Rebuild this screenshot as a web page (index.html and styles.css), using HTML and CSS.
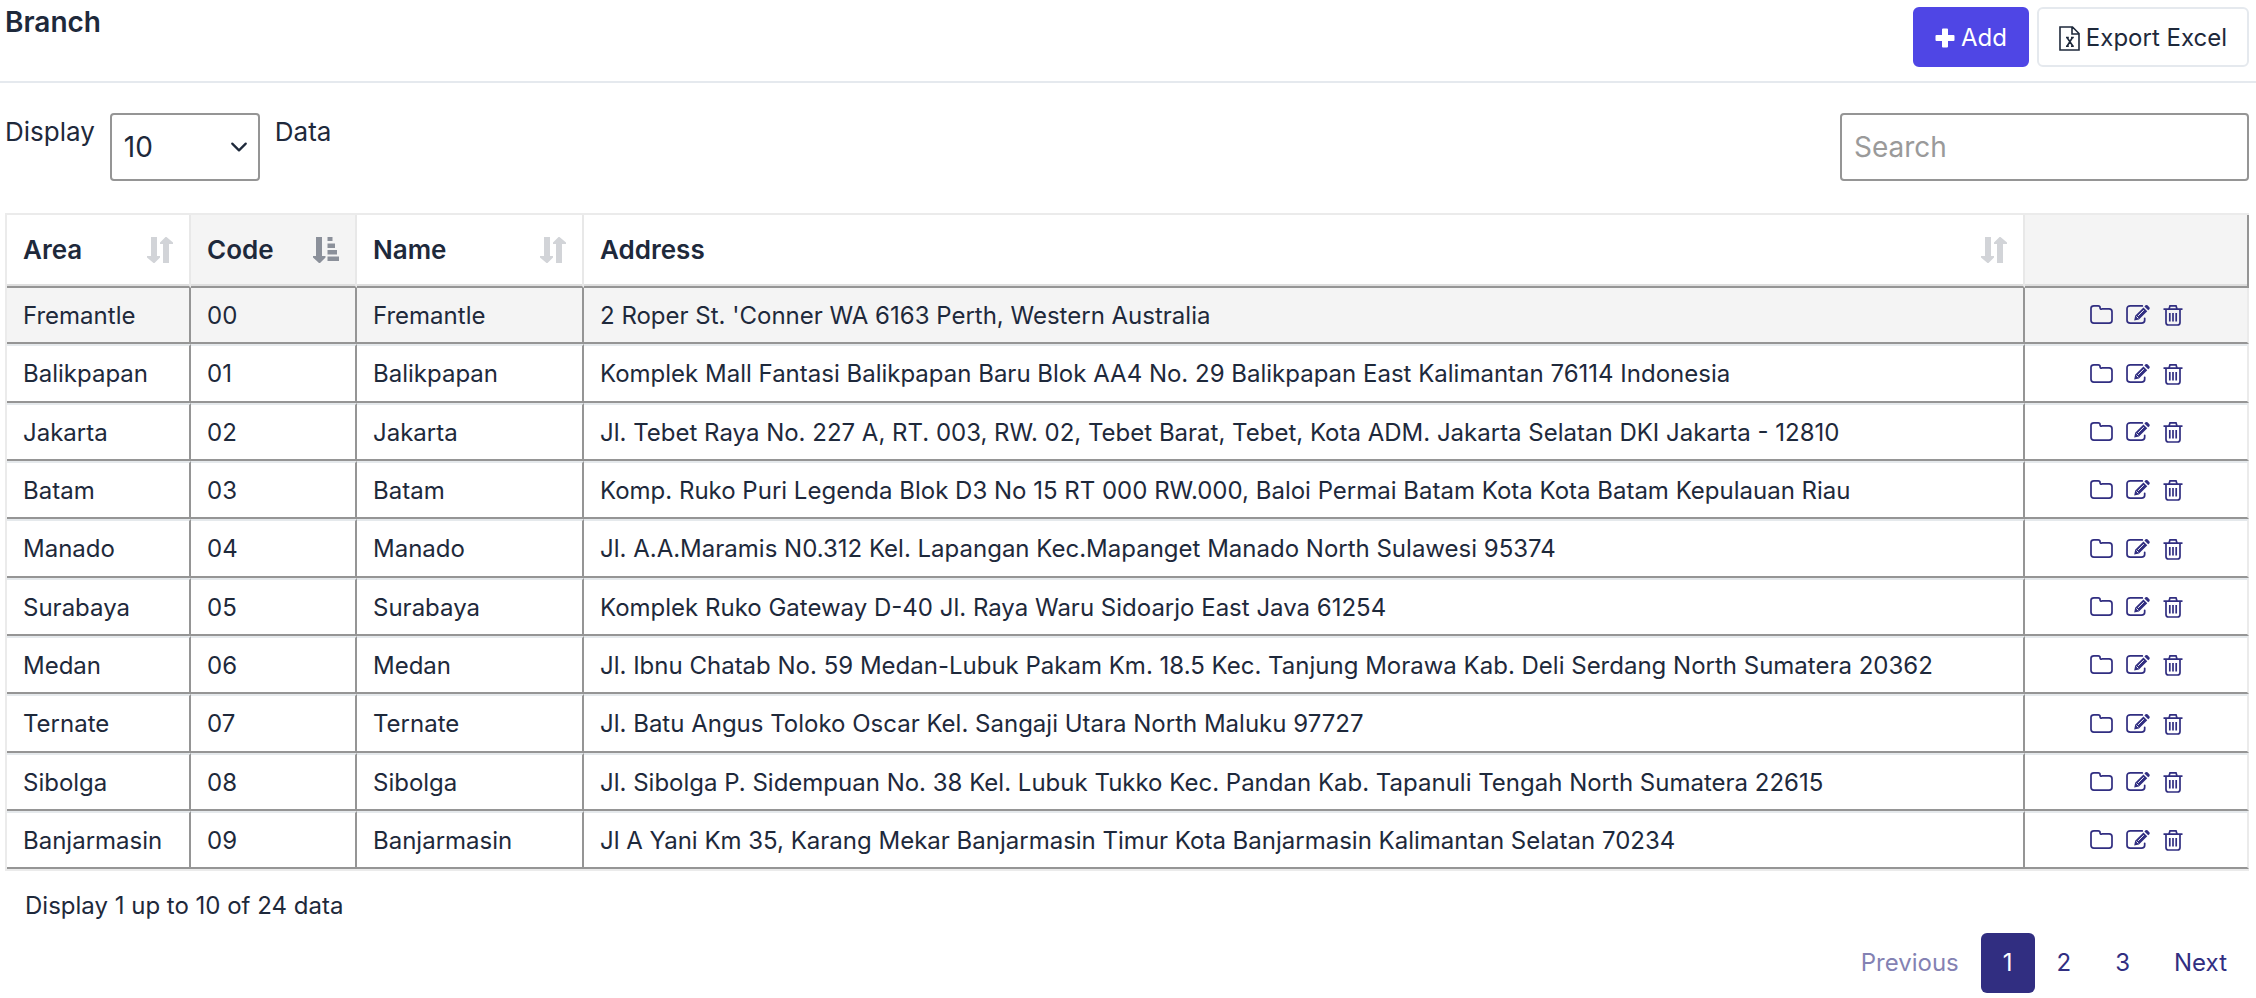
FILE: index.html
```
<!DOCTYPE html>
<html lang="en">
<head>
<meta charset="utf-8">
<title>Branch</title>
<link rel="stylesheet" href="styles.css">
</head>
<body>
<svg class="sprite" aria-hidden="true">
  <symbol id="folder" viewBox="0 0 24 22"><path d="M4 2h4.500q2 0 2 2t2 1.200H20q3 0 3 3V17q0 3-3 3H4q-3 0-3-3V4.500Q1 2 4 2z" fill="none" stroke="currentColor" stroke-width="1.800"/></symbol>
  <symbol id="edit" viewBox="0 0 25 22"><path d="M17 2H4.500Q1 2 1 5v12q0 3 3.500 3H16q3.500 0 3.500-3v-2" fill="none" stroke="currentColor" stroke-width="1.800" stroke-linecap="round"/><path d="M18.200 3.600l4 4-8.700 8.600-5 1 1-5zM19.200 2.600l1.200-1.200q1-.8 2 0l2 2q.8 1 0 2l-1.200 1.200z" fill="currentColor"/><path d="M12.500 12.500l6-6M10.800 13l2 2" stroke="#fff" stroke-width="1"/></symbol>
  <symbol id="trash" viewBox="0 0 20 22"><path d="M.5 5.200h19M6 5l1-3.200h6L14 5M3 5v13.500Q3 21 5.500 21h9q2.500 0 2.500-2.500V5M6.800 9v8.500M10 9v8.500M13.200 9v8.500" fill="none" stroke="currentColor" stroke-width="1.700"/></symbol>
  <symbol id="sort" viewBox="0 0 26 26"><path d="M4 0h6v19h3v1.500L7.500 26h-1L0 20.500V19h4zM16 26h6V7h4V5.500L19.500 0h-1L13 5.500V7h3z" fill="currentColor"/></symbol>
  <symbol id="sort-asc" viewBox="0 0 26 26"><path d="M3 0h6v19h3.500v1.500L7 26H6L0 20.500V19h3zM14.500 0h5v4h-5zM14.500 6.500h7.500v4.500h-7.500zM14.500 13h9.500v4.500h-9.500zM14.500 19.500H26V24H14.500z" fill="currentColor"/></symbol>
</svg>

<header class="page-header">
  <h1 class="title">Branch</h1>
  <div class="actions">
    <button type="button" class="btn btn-primary">
      <svg class="plus" viewBox="0 0 20 20" aria-hidden="true"><path d="M8 .5h4q1 0 1 1V7h5.500q1 0 1 1v4q0 1-1 1H13v5.500q0 1-1 1H8q-1 0-1-1V13H1.500q-1 0-1-1V8q0-1 1-1H7V1.500q0-1 1-1z" fill="currentColor"/></svg>
      Add
    </button>
    <button type="button" class="btn btn-outline">
      <svg class="excel" viewBox="0 0 21 25" aria-hidden="true"><path d="M1 1h12.500L20 7.500V24H1zM13 1v7h7M7 11.500h2.800M12 11.500h2.800M7 20.200h2.800M12 20.200h2.800M8 11.500l6 8.700M13.500 11.500L8 20.200" fill="none" stroke="currentColor" stroke-width="1.600"/></svg>
      Export Excel
    </button>
  </div>
</header>

<main class="content">
  <div class="toolbar">
    <div class="length">
      <label for="page-size">Display</label>
      <select id="page-size" class="field select"><option>10</option><option>25</option><option>50</option></select>
      <span>Data</span>
    </div>
    <input type="search" class="field search" placeholder="Search" aria-label="Search">
  </div>

  <table class="grid">
    <colgroup><col class="col-area"><col class="col-code"><col class="col-name"><col><col class="col-actions"></colgroup>
    <thead>
      <tr>
        <th><div class="th">Area<svg class="sort"><use href="#sort"/></svg></div></th>
        <th class="shaded"><div class="th">Code<svg class="sort active"><use href="#sort-asc"/></svg></div></th>
        <th><div class="th">Name<svg class="sort"><use href="#sort"/></svg></div></th>
        <th><div class="th">Address<svg class="sort"><use href="#sort"/></svg></div></th>
        <th class="shaded" aria-label="Actions"></th>
      </tr>
    </thead>
    <tbody id="rows"></tbody>
  </table>

  <p class="info">Display 1 up to 10 of 24 data</p>
  <nav class="pager" aria-label="Pages">
    <button type="button" class="page" disabled>Previous</button>
    <button type="button" class="page current">1</button>
    <button type="button" class="page">2</button>
    <button type="button" class="page">3</button>
    <button type="button" class="page">Next</button>
  </nav>
</main>
<script src="script.js"></script>
</body>
</html>
```
FILE: styles.css
```
* { box-sizing: border-box; }

body {
  margin: 0;
  background: #fff;
  color: #1e293b;
  font-family: Inter, "Liberation Sans", sans-serif;
  font-size: 24px;
  line-height: 36px;
}

button, input, select { font: inherit; color: inherit; }

.sprite { display: none; }

.page-header {
  display: flex;
  justify-content: space-between;
  align-items: flex-start;
  padding: 7px 7px 14px 5px;
  border-bottom: 2px solid #e5e9ee;
}

.title {
  margin: 0;
  font-size: 28px;
  line-height: 30px;
  font-weight: 600;
}

.actions { display: flex; gap: 8px; }

.btn {
  display: flex;
  align-items: center;
  gap: 6px;
  height: 60px;
  padding: 2px 20px 0;
  border: 2px solid #e5e9ee;
  border-radius: 6px;
  background: #fff;
}

.btn-primary {
  border-color: #4f46e5;
  background: #4f46e5;
  color: #fff;
}

.plus { width: 20px; height: 20px; }
.excel { width: 21px; height: 25px; }

.content { padding: 30px 7px 0 5px; }

.toolbar {
  display: flex;
  justify-content: space-between;
  font-size: 26px;
  line-height: 38px;
}

.length { display: flex; gap: 15px; }

.field {
  height: 68px;
  border: 2px solid #959595;
  border-radius: 4px;
  background-color: #fff;
  font-size: 28px;
}

.select {
  width: 150px;
  padding: 0 12px;
  appearance: none;
  background-image: url("data:image/svg+xml,%3Csvg xmlns='http://www.w3.org/2000/svg' viewBox='0 0 16 12'%3E%3Cpath d='M2 3l6 6 6-6' fill='none' stroke='%231e293b' stroke-width='2' stroke-linecap='round' stroke-linejoin='round'/%3E%3C/svg%3E");
  background-repeat: no-repeat;
  background-position: right 10px center;
  background-size: 18px 14px;
}

.search { width: 409px; padding: 0 12px; }
.search::placeholder { color: #9a9a9a; opacity: 1; }

.grid {
  width: 100%;
  margin-top: 32px;
  border: 2px solid #ebebeb;
  border-right: 0;
  border-collapse: separate;
  border-spacing: 0;
  table-layout: fixed;
}

.col-area { width: 184px; }
.col-code { width: 166px; }
.col-name { width: 227px; }
.col-actions { width: 224px; }

.grid th {
  height: 73px;
  padding: 0 16px 2px;
  border-right: 2px solid #e8e8e8;
  border-bottom: 2px solid #959595;
  box-shadow: inset 0 -2px #dedede;
  font-size: 26px;
  font-weight: 600;
  text-align: left;
}

.grid th:last-child { border-right-color: #959595; }
.shaded { background: #f4f4f4; }

.th {
  display: flex;
  justify-content: space-between;
  align-items: center;
}

.sort { width: 26px; height: 26px; color: #d2d4d8; }
.sort.active { color: #8b909a; }

.grid td {
  height: 58px;
  padding: 1px 16px 0;
  border: solid #959595;
  border-width: 2px 2px 2px 0;
  border-top-color: #e5e9ec;
}

.grid tr:nth-child(3n + 2) td { height: 59px; }
.grid td:last-child { padding-top: 0; border-right-color: #ebebeb; }

.grid tbody tr:first-child td {
  height: 56px;
  border-top: 0;
  background: #f4f4f4;
}

.row-actions {
  display: flex;
  justify-content: center;
  gap: 13px;
}

.icon-btn {
  display: flex;
  padding: 0;
  border: 0;
  background: none;
  color: #312e81;
}

.icon-btn svg { width: 23px; height: 21px; }
.icon-btn.edit svg { width: 24px; }
.icon-btn.trash svg { width: 20px; height: 22px; }

.info { margin: 17px 20px 0; }

.pager {
  display: flex;
  justify-content: flex-end;
  margin-top: 9px;
}

.page {
  height: 60px;
  padding: 0 22px;
  border: 0;
  border-radius: 6px;
  background: none;
  color: #312e81;
}

.page:disabled { opacity: .6; }
.page.current { background: #312e81; color: #fff; }
```
FILE: script.js
```
const branches = [
  ["Fremantle", "2 Roper St. 'Conner WA 6163 Perth, Western Australia"],
  ["Balikpapan", "Komplek Mall Fantasi Balikpapan Baru Blok AA4 No. 29 Balikpapan East Kalimantan 76114 Indonesia"],
  ["Jakarta", "Jl. Tebet Raya No. 227 A, RT. 003, RW. 02, Tebet Barat, Tebet, Kota ADM. Jakarta Selatan DKI Jakarta - 12810"],
  ["Batam", "Komp. Ruko Puri Legenda Blok D3 No 15 RT 000 RW.000, Baloi Permai Batam Kota Kota Batam Kepulauan Riau"],
  ["Manado", "Jl. A.A.Maramis N0.312 Kel. Lapangan Kec.Mapanget Manado North Sulawesi 95374"],
  ["Surabaya", "Komplek Ruko Gateway D-40 Jl. Raya Waru Sidoarjo East Java 61254"],
  ["Medan", "Jl. Ibnu Chatab No. 59 Medan-Lubuk Pakam Km. 18.5 Kec. Tanjung Morawa Kab. Deli Serdang North Sumatera 20362"],
  ["Ternate", "Jl. Batu Angus Toloko Oscar Kel. Sangaji Utara North Maluku 97727"],
  ["Sibolga", "Jl. Sibolga P. Sidempuan No. 38 Kel. Lubuk Tukko Kec. Pandan Kab. Tapanuli Tengah North Sumatera 22615"],
  ["Banjarmasin", "Jl A Yani Km 35, Karang Mekar Banjarmasin Timur Kota Banjarmasin Kalimantan Selatan 70234"]
];

const action = (icon, label) =>
  `<button type="button" class="icon-btn ${icon}" aria-label="${label}"><svg><use href="#${icon}"/></svg></button>`;

document.getElementById("rows").innerHTML = branches.map(([name, address], i) => `
  <tr>
    <td>${name}</td>
    <td>${String(i).padStart(2, "0")}</td>
    <td>${name}</td>
    <td>${address}</td>
    <td><div class="row-actions">${action("folder", "Open")}${action("edit", "Edit")}${action("trash", "Delete")}</div></td>
  </tr>`).join("");
```
